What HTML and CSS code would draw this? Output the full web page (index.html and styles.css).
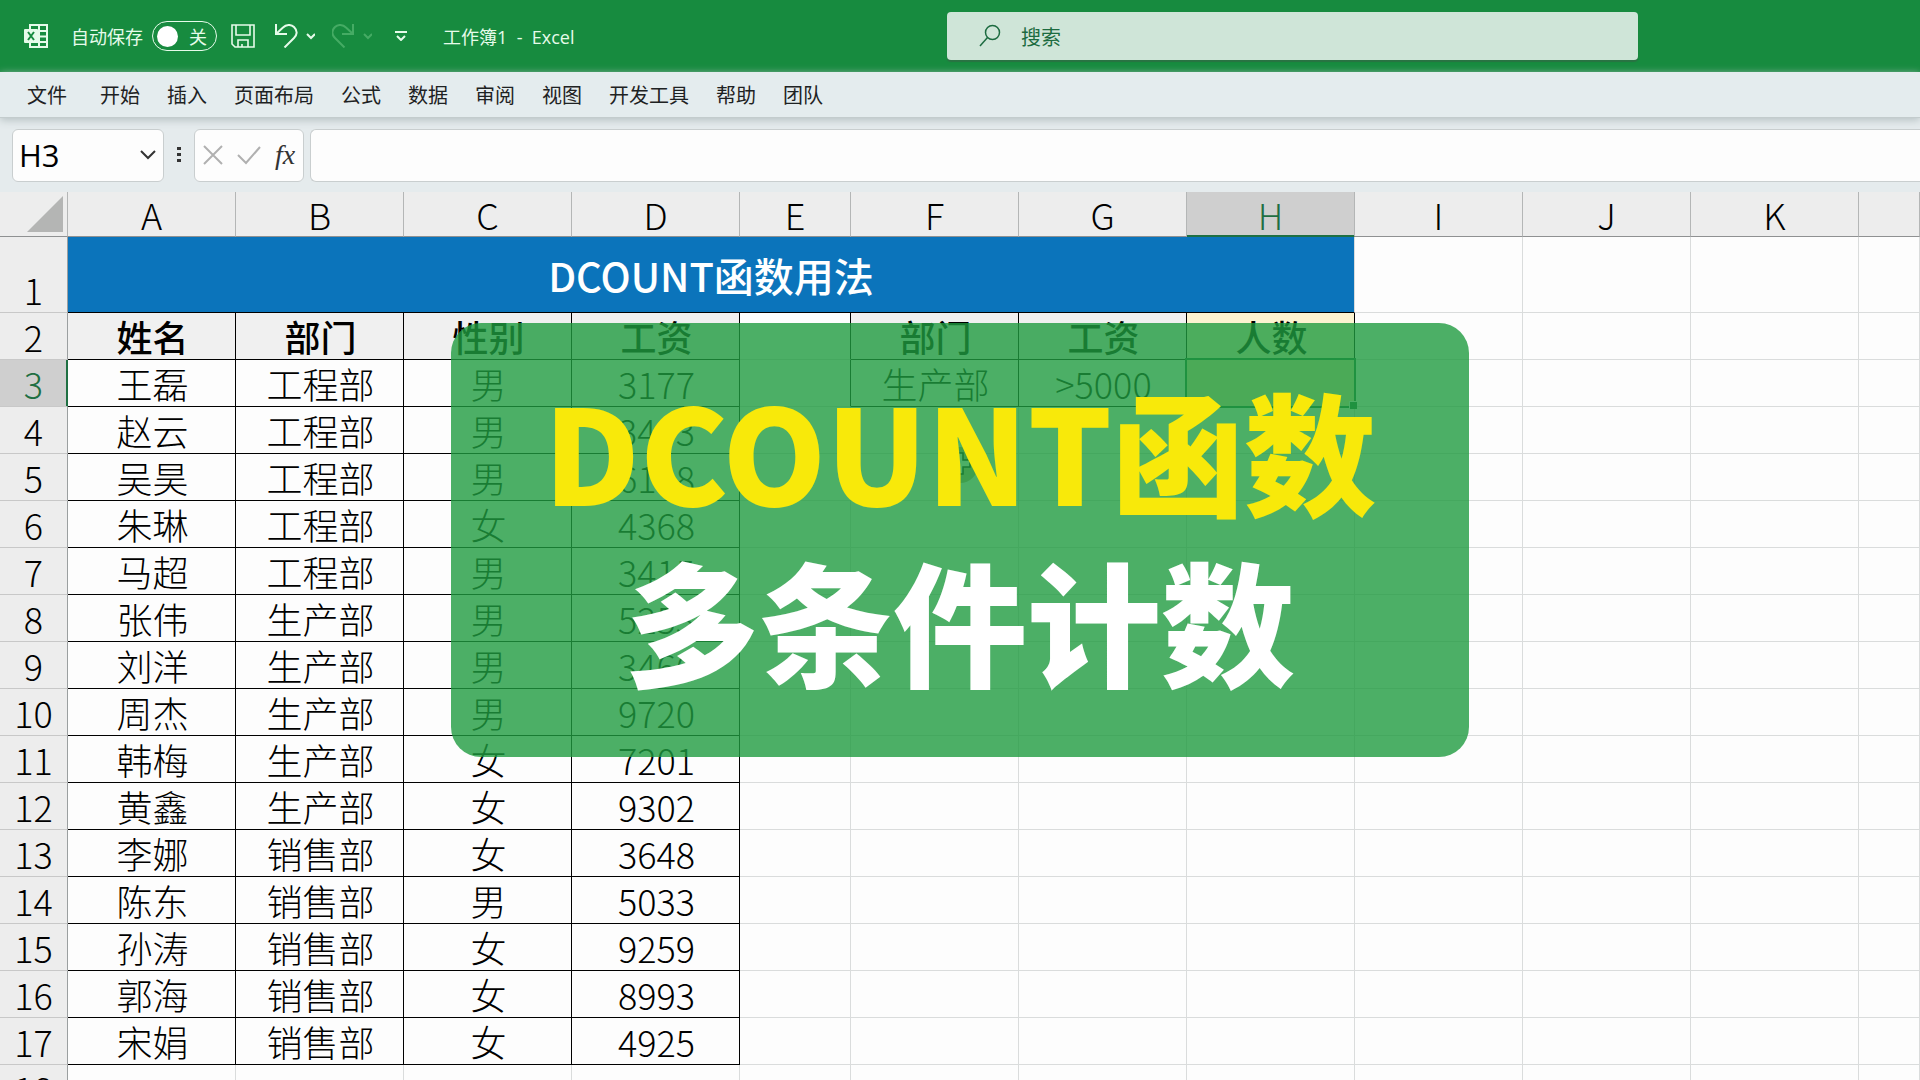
FILE: index.html
```html
<!DOCTYPE html>
<html lang="zh-CN">
<head>
<meta charset="utf-8">
<title>工作簿1 - Excel</title>
<link rel="stylesheet" href="styles.css">
</head>
<body>
<header class="titlebar">
  <div class="quick">
    <svg class="logo" viewBox="0 0 24 24" width="24" height="24" aria-hidden="true">
      <path d="M6 1h17v22H6zM6 7h17M6 12.500h17M6 18h17M15 1v22" fill="none" stroke="#e6fbea" stroke-width="2"/>
      <rect x="0" y="5" width="14" height="14" rx="1" fill="#e6fbea"/>
      <path d="M4 8l6 8M10 8l-6 8" stroke="#178b3f" stroke-width="2"/>
    </svg>
    <label class="autosave" for="autosave">自动保存
      <span class="switch"><input type="checkbox" role="switch" id="autosave"><span>关</span></span>
    </label>
    <button class="tool save" aria-label="保存">
      <svg viewBox="0 0 24 24" width="24" height="24"><path d="M1 1h22v22H4l-3-3zM5 1v10h14V1M7 23v-7h10v7M11 20v3" fill="none" stroke="currentColor" stroke-width="1.600"/></svg>
    </button>
    <button class="tool" aria-label="撤消">
      <svg viewBox="0 0 40 24" width="40" height="24"><path d="M1 0v10h11M1 10l7-6.500C11 .500 16 0 19 3c4 4 3 8 0 11l-9.500 9.500" fill="none" stroke="currentColor" stroke-width="2"/><path d="M32 10l4 4 4-4" fill="none" stroke="currentColor" stroke-width="2"/></svg>
    </button>
    <button class="tool faded" aria-label="恢复">
      <svg viewBox="0 0 40 24" width="40" height="24"><path d="M21 0v10H10M21 10l-7-6.500C11 .500 6 0 3 3c-4 4-3 8 0 11l9.500 9.500" fill="none" stroke="currentColor" stroke-width="2"/><path d="M32 10l4 4 4-4" fill="none" stroke="currentColor" stroke-width="2"/></svg>
    </button>
    <button class="tool more" aria-label="自定义快速访问工具栏">
      <svg viewBox="0 0 12 10" width="12" height="10"><path d="M0 1h12M2 5l4 4 4-4" fill="none" stroke="currentColor" stroke-width="2"/></svg>
    </button>
    <span class="doc">工作簿1&nbsp; -&nbsp; Excel</span>
  </div>
  <label class="search">
    <svg viewBox="0 0 22 24" width="22" height="24" aria-hidden="true"><circle cx="13.500" cy="8.500" r="7" fill="none" stroke="currentColor" stroke-width="1.500"/><path d="M8.500 13.500L1 22" stroke="currentColor" stroke-width="1.500"/></svg>
    <input type="search" placeholder="搜索" aria-label="搜索">
  </label>
</header>
<nav class="tabs">
  <a class="file" href="#">文件</a><a href="#">开始</a><a href="#">插入</a><a href="#">页面布局</a><a href="#">公式</a><a href="#">数据</a><a href="#">审阅</a><a href="#">视图</a><a href="#">开发工具</a><a href="#">帮助</a><a href="#">团队</a>
</nav>
<div class="formulabar">
  <div class="box namebox">
    <input type="text" value="H3" aria-label="名称框">
    <button aria-label="展开名称框"><svg viewBox="0 0 16 10" width="16" height="10"><path d="M1 1l7 7 7-7" fill="none" stroke="#333" stroke-width="2"/></svg></button>
  </div>
  <svg class="dots" viewBox="0 0 4 16" width="4" height="16" aria-hidden="true"><path d="M0 0h4v3H0zM0 6h4v3H0zM0 12h4v3H0z" fill="#333"/></svg>
  <div class="box actions">
    <button aria-label="取消"><svg viewBox="0 0 20 20" width="20" height="20"><path d="M1 1l18 18M19 1L1 19" fill="none" stroke="#b0b0b0" stroke-width="2"/></svg></button>
    <button aria-label="输入"><svg viewBox="0 0 24 20" width="24" height="20"><path d="M1 10l8 8L23 2" fill="none" stroke="#b0b0b0" stroke-width="2"/></svg></button>
    <button class="fx" aria-label="插入函数">fx</button>
  </div>
  <input class="box formula" type="text" aria-label="编辑栏">
</div>
<main class="sheet">
  <table>
    <colgroup><col class="c-num"><col class="c"><col class="c"><col class="c"><col class="c"><col class="c-gap"><col class="c"><col class="c"><col class="c"><col class="c"><col class="c"><col class="c"><col></colgroup>
    <thead>
      <tr><th class="corner"><svg viewBox="0 0 38 38" width="38" height="38" aria-hidden="true"><path d="M37 1v36H1z" fill="#b4b5b4"/></svg></th><th>A</th><th>B</th><th>C</th><th>D</th><th>E</th><th>F</th><th>G</th><th class="on">H</th><th>I</th><th>J</th><th>K</th><th></th></tr>
    </thead>
    <tbody>
      <tr class="banner"><th>1</th><td class="heading" colspan="8">DCOUNT函数用法</td><td></td><td></td><td></td><td></td></tr>
      <tr><th>2</th><td class="k h">姓名</td><td class="k h">部门</td><td class="k h">性别</td><td class="k h">工资</td><td class="edge"></td><td class="k h">部门</td><td class="k h">工资</td><td class="k h y">人数</td><td></td><td></td><td></td><td></td></tr>
      <tr><th class="on">3</th><td class="k">王磊</td><td class="k">工程部</td><td class="k">男</td><td class="k">3177</td><td class="edge"></td><td class="k">生产部</td><td class="k">&gt;5000</td><td class="k y active"></td><td></td><td></td><td></td><td></td></tr>
      <tr><th>4</th><td class="k">赵云</td><td class="k">工程部</td><td class="k">男</td><td class="k">3443</td><td></td><td></td><td></td><td></td><td></td><td></td><td></td><td></td></tr>
      <tr><th>5</th><td class="k">吴昊</td><td class="k">工程部</td><td class="k">男</td><td class="k">6198</td><td></td><td></td><td></td><td></td><td></td><td></td><td></td><td></td></tr>
      <tr><th>6</th><td class="k">朱琳</td><td class="k">工程部</td><td class="k">女</td><td class="k">4368</td><td></td><td></td><td></td><td></td><td></td><td></td><td></td><td></td></tr>
      <tr><th>7</th><td class="k">马超</td><td class="k">工程部</td><td class="k">男</td><td class="k">3415</td><td></td><td></td><td></td><td></td><td></td><td></td><td></td><td></td></tr>
      <tr><th>8</th><td class="k">张伟</td><td class="k">生产部</td><td class="k">男</td><td class="k">5253</td><td></td><td></td><td></td><td></td><td></td><td></td><td></td><td></td></tr>
      <tr><th>9</th><td class="k">刘洋</td><td class="k">生产部</td><td class="k">男</td><td class="k">3466</td><td></td><td></td><td></td><td></td><td></td><td></td><td></td><td></td></tr>
      <tr><th>10</th><td class="k">周杰</td><td class="k">生产部</td><td class="k">男</td><td class="k">9720</td><td></td><td></td><td></td><td></td><td></td><td></td><td></td><td></td></tr>
      <tr><th>11</th><td class="k">韩梅</td><td class="k">生产部</td><td class="k">女</td><td class="k">7201</td><td></td><td></td><td></td><td></td><td></td><td></td><td></td><td></td></tr>
      <tr><th>12</th><td class="k">黄鑫</td><td class="k">生产部</td><td class="k">女</td><td class="k">9302</td><td></td><td></td><td></td><td></td><td></td><td></td><td></td><td></td></tr>
      <tr><th>13</th><td class="k">李娜</td><td class="k">销售部</td><td class="k">女</td><td class="k">3648</td><td></td><td></td><td></td><td></td><td></td><td></td><td></td><td></td></tr>
      <tr><th>14</th><td class="k">陈东</td><td class="k">销售部</td><td class="k">男</td><td class="k">5033</td><td></td><td></td><td></td><td></td><td></td><td></td><td></td><td></td></tr>
      <tr><th>15</th><td class="k">孙涛</td><td class="k">销售部</td><td class="k">女</td><td class="k">9259</td><td></td><td></td><td></td><td></td><td></td><td></td><td></td><td></td></tr>
      <tr><th>16</th><td class="k">郭海</td><td class="k">销售部</td><td class="k">女</td><td class="k">8993</td><td></td><td></td><td></td><td></td><td></td><td></td><td></td><td></td></tr>
      <tr><th>17</th><td class="k">宋娟</td><td class="k">销售部</td><td class="k">女</td><td class="k">4925</td><td></td><td></td><td></td><td></td><td></td><td></td><td></td><td></td></tr>
      <tr><th>18</th><td></td><td></td><td></td><td></td><td></td><td></td><td></td><td></td><td></td><td></td><td></td><td></td></tr>
    </tbody>
  </table>
  <svg class="pointer" viewBox="0 0 36 36" width="36" height="36" aria-hidden="true"><circle cx="18" cy="18" r="18" fill="#a08a50" fill-opacity=".7"/><path d="M14 6h7v7h7v7h-7v7h-7v-7H7v-7h7z" fill="#fff" stroke="#000" stroke-width="1.500"/></svg>
  <div class="caption"><p class="line1">DCOUNT函数</p><p class="line2">多条件计数</p></div>
</main>
</body>
</html>
```
FILE: styles.css
```css
* { box-sizing: border-box; }
body {
  margin: 0;
  height: 100vh;
  display: flex;
  flex-direction: column;
  overflow: hidden;
  background: #fdfdfd;
  color: #000;
  font-family: "Noto Sans CJK SC", sans-serif;
}
button, input { font: inherit; color: inherit; border: 0; padding: 0; margin: 0; background: none; outline: 0; }
button { display: flex; align-items: center; justify-content: center; }
svg { display: block; flex: none; }

.titlebar {
  flex: none;
  height: 72px;
  display: flex;
  align-items: center;
  padding: 0 282px 0 24px;
  background: #178b3f;
  color: #e6fbea;
  font-size: 18px;
}
.quick { flex: 1; display: flex; align-items: center; }
.autosave { display: flex; align-items: center; gap: 9px; margin: 0 14px 0 23px; white-space: nowrap; }
.switch {
  width: 65px;
  height: 30px;
  display: flex;
  align-items: center;
  justify-content: space-between;
  padding: 0 9px 0 4px;
  border: 1px solid #e6fbea;
  border-radius: 15px;
}
.switch input { appearance: none; width: 21px; height: 21px; border-radius: 50%; background: #fff; }
.tool { margin-left: 17px; }
.save { margin: 0 3px 0 0; }
.faded { color: #45ab64; }
.more { margin: 0 36px 0 23px; }
.doc { white-space: nowrap; font-family: "Open Sans", "Noto Sans CJK SC", sans-serif; }
.search {
  width: 691px;
  height: 48px;
  display: flex;
  align-items: center;
  gap: 20px;
  padding: 0 32px;
  border-radius: 4px;
  background: #cfe5d8;
  color: #1c6b40;
  font-size: 20px;
  box-shadow: 0 2px 1px #2a7243;
}
.search input { flex: 1; min-width: 0; }
.search input::placeholder { color: #1c6b40; opacity: 1; }

.tabs {
  flex: none;
  position: relative;
  height: 46px;
  display: flex;
  align-items: center;
  gap: 27px;
  padding: 0 27px;
  background: #e4ecee;
  border-bottom: 1px solid #c3cccd;
  box-shadow: 0 2px 8px #b4bfc1;
  font-size: 20px;
}
.tabs a { color: #1e2223; text-decoration: none; white-space: nowrap; }
.tabs .file { margin-right: 6px; }

.formulabar {
  flex: none;
  height: 74px;
  display: flex;
  align-items: center;
  padding: 0 0 0 12px;
  background: #e5ebed;
}
.box { height: 53px; display: flex; align-items: center; background: #fdfdfd; border: 1px solid #c9cecf; border-radius: 6px; }
.namebox { width: 152px; padding: 0 7px 0 6px; font: 31px "Open Sans", "Noto Sans", sans-serif; }
.namebox input { flex: 1; min-width: 0; }
.dots { margin: 0 13px; }
.actions { width: 110px; gap: 14px; padding: 0 8px; }
.fx { font: italic 28px "Liberation Serif", serif; color: #333; }
.formula { flex: 1; min-width: 0; margin-left: 6px; border-radius: 6px 0 0 6px; border-right: 0; }

.sheet { position: relative; flex: 1; min-height: 0; overflow: hidden; }
table { width: 100%; table-layout: fixed; border-collapse: separate; border-spacing: 0; font-size: 36px; font-weight: 300; }
.c-num { width: 68px; }
.c { width: 168px; }
.c-gap { width: 111px; }
th, td {
  height: 47px;
  padding: 0;
  border: solid #dadcdc;
  border-width: 0 1px 1px 0;
  line-height: 46px;
  text-align: center;
  white-space: nowrap;
}
th { font-weight: 300; background: #ededed; border-color: #c8c8c8; }
tbody th { border-right-color: #9b9fa0; vertical-align: bottom; }
thead th { height: 45px; line-height: 44px; border-bottom-color: #8f9192; border-right-color: #b4b6b6; }
.corner svg { margin: 0 3px 0 auto; }
.on { background: #cfcfcf; color: #1f6f43; }
thead .on { box-shadow: inset 0 -1px #1f7043; border-bottom-color: #1f7043; }
tbody .on { box-shadow: inset -1px 0 #1f7043; border-right-color: #1f7043; }
.banner th, .banner td { height: 76px; }
.heading { background: #0b74bb; color: #fff; font-size: 40px; font-weight: 500; border-bottom-color: #000; }
.k { padding-left: 2px; border-color: #000; }
.edge { border-right-color: #000; }
.h { background: #f0f0f0; font-weight: 500; }
.y { background: #fcf3d0; }
.active { position: relative; background: #fbe6b4; }
.active::before { content: ""; position: absolute; inset: -2px; border: 2px solid #1f7043; }
.active::after { content: ""; position: absolute; right: -3px; bottom: -3px; width: 7px; height: 7px; background: #1f7043; border: solid #fff; border-width: 1px 0 0 1px; }

.pointer { position: absolute; left: 942px; top: 255px; }
.caption {
  position: absolute;
  top: 131px;
  left: 0;
  right: 0;
  width: 53%;
  height: 434px;
  margin: 0 auto;
  padding-bottom: 12px;
  display: flex;
  flex-direction: column;
  justify-content: center;
  border-radius: 30px;
  background: rgba(31, 155, 64, .8);
  color: #fff;
  font-size: 132px;
  font-weight: 900;
  line-height: 170px;
  text-align: center;
  white-space: nowrap;
}
.caption p { margin: 0; }
.caption .line1 { color: #f8e90a; }
.caption .line2 { font-size: 134px; }
```
